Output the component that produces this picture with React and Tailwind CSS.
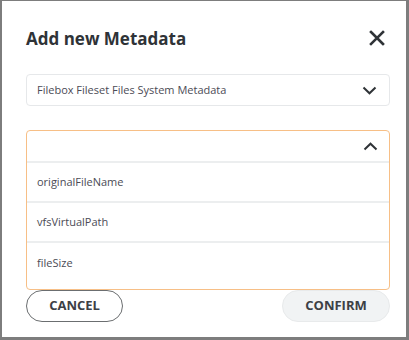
export default function App() {
  const fields = ["originalFileName", "vfsVirtualPath", "fileSize"];

  return (
    <div
      className="w-[409px] h-[340px] bg-white border-[#7d7d7d] border-l-2 border-t border-r-[3px] border-b-[3px] pl-6 pr-4 pt-[24px] flex flex-col"
      style={{ fontFamily: '"Open Sans", "Noto Sans", sans-serif' }}
    >
      <div className="flex items-center justify-between h-[26px]">
        <h1 className="text-[17px] font-bold text-[#2f3337] leading-none">Add new Metadata</h1>
        <svg width="16" height="16" viewBox="0 0 16 16" className="mr-[5px]">
          <path d="M2 2L14 14M14 2L2 14" stroke="#2f3337" strokeWidth="2.6" strokeLinecap="square" />
        </svg>
      </div>

      <div className="mt-[23px] h-[32px] border border-[#e6e8ea] rounded-[4px] flex items-center justify-between pl-[10px] pr-[12px]">
        <span className="text-[11px] text-[#4b4b55]">Filebox Fileset Files System Metadata</span>
        <svg width="15" height="9" viewBox="0 0 15 9">
          <path d="M1.5 1.5L7.5 7.3L13.5 1.5" stroke="#2f3337" strokeWidth="2" fill="none" />
        </svg>
      </div>

      <div className="mt-[24px] border-[1.5px] border-[#f7bf86] rounded-[4px] pb-[6px]">
        <div className="h-[32px] flex items-center justify-end pr-[11px] border-b-2 border-[#eceeef]">
          <svg width="15" height="9" viewBox="0 0 15 9">
            <path d="M1.5 7.5L7.5 1.7L13.5 7.5" stroke="#2f3337" strokeWidth="2" fill="none" />
          </svg>
        </div>
        {fields.map((f, i) => (
          <div
            key={f}
            className={`h-[40px] flex items-center pl-[10px] text-[11px] text-[#4b4b55] ${i < fields.length - 1 ? "border-b-2 border-[#eceeef]" : ""}`}
          >
            {f}
          </div>
        ))}
      </div>

      <div className="flex items-center justify-between">
        <button className="w-[97px] h-[32px] rounded-full border border-[#6b6e70] text-[13px] font-bold text-[#3c4045]">
          CANCEL
        </button>
        <button className="w-[108px] h-[32px] rounded-full bg-[#f1f3f4] border border-[#e8eaeb] text-[13px] font-bold text-[#3c4045]">
          CONFIRM
        </button>
      </div>
    </div>
  );
}
